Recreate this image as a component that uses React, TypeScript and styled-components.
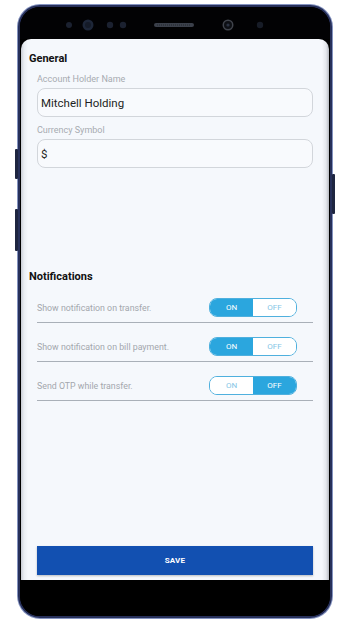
import styled, { createGlobalStyle } from "styled-components";

const GlobalStyle = createGlobalStyle`
  html, body {
    margin: 0;
    padding: 0;
    background: #ffffff;
    font-family: Roboto, "Liberation Sans", Arial, sans-serif;
  }
  * {
    box-sizing: border-box;
  }
`;

const notifications = [
  { label: "Show notification on transfer.", on: true },
  { label: "Show notification on bill payment.", on: true },
  { label: "Send OTP while transfer.", on: false },
];

const Sensors = () => (
  <svg width="310" height="32" viewBox="0 0 310 32">
    <circle cx="49" cy="18" r="3" fill="#1b2130" />
    <circle cx="68" cy="18" r="5.5" fill="#1d2638" />
    <circle cx="68" cy="18" r="3" fill="#151b28" />
    <circle cx="90" cy="18" r="3.2" fill="#1b2130" />
    <circle cx="103" cy="18" r="3.2" fill="#1b2130" />
    <rect x="134" y="16" width="40" height="4" rx="2" fill="#3b404b" />
    <line x1="137" y1="18" x2="171" y2="18" stroke="#22262e" strokeWidth="1" strokeDasharray="1 1" />
    <circle cx="208" cy="18" r="5.5" fill="#40444c" />
    <circle cx="208" cy="18" r="4" fill="#0d0f14" />
    <circle cx="208" cy="18" r="1.6" fill="#2b3242" />
    <circle cx="240" cy="18" r="3.2" fill="#171c27" />
  </svg>
);

export default function App() {
  return (
    <>
      <GlobalStyle />
      <Page>
        <PhoneWrap>
          <SideButton $side="left" $top={144} $height={30} />
          <SideButton $side="left" $top={204} $height={42} />
          <SideButton $side="right" $top={169} $height={40} />
          <Phone>
            <TopBezel>
              <Sensors />
            </TopBezel>
            <Screen>
              <Content>
                <SectionTitle>General</SectionTitle>
                <Field>
                  <Label>Account Holder Name</Label>
                  <Input>Mitchell Holding</Input>
                </Field>
                <Field>
                  <Label>Currency Symbol</Label>
                  <Input>$</Input>
                </Field>

                <SectionTitle $spaced>Notifications</SectionTitle>
                <List>
                  {notifications.map((n) => (
                    <Row key={n.label}>
                      <RowText>{n.label}</RowText>
                      <Toggle>
                        <ToggleHalf $active={n.on}>ON</ToggleHalf>
                        <ToggleHalf $active={!n.on}>OFF</ToggleHalf>
                      </Toggle>
                    </Row>
                  ))}
                </List>
              </Content>
              <SaveButton>SAVE</SaveButton>
            </Screen>
            <BottomBezel />
          </Phone>
        </PhoneWrap>
      </Page>
    </>
  );
}

const Page = styled.div`
  width: 350px;
  height: 622px;
  display: flex;
  justify-content: center;
  padding-top: 5px;
`;

const PhoneWrap = styled.div`
  position: relative;
  width: 314px;
  height: 613px;
`;

const SideButton = styled.div<{ $side: "left" | "right"; $top: number; $height: number }>`
  position: absolute;
  top: ${(p) => p.$top}px;
  ${(p) => (p.$side === "left" ? "left: -3px;" : "right: -3px;")}
  width: 3px;
  height: ${(p) => p.$height}px;
  background: #1e2540;
  border-radius: 1px;
`;

const Phone = styled.div`
  width: 100%;
  height: 100%;
  display: flex;
  flex-direction: column;
  background: #000;
  border: 2px solid #27305a;
  border-radius: 22px;
  box-shadow: 0 0 0 1px #8493c0;
  overflow: hidden;
`;

const TopBezel = styled.div`
  height: 32px;
  flex-shrink: 0;
  display: flex;
  align-items: flex-start;
  background: #020204;
`;

const Screen = styled.div`
  flex: 1;
  display: flex;
  flex-direction: column;
  margin: 0 1px;
  border-radius: 10px 10px 0 0;
  background: linear-gradient(
    to right,
    #c8ccd3 0px,
    #e9edf2 3px,
    #f5f8fc 7px,
    #f5f8fc calc(100% - 7px),
    #e4e7ec calc(100% - 3px),
    #b7bbc2 100%
  );
  padding: 0 16px 5px 16px;
`;

const Content = styled.div`
  flex: 1;
  padding-top: 13px;
`;

const SectionTitle = styled.h2<{ $spaced?: boolean }>`
  margin: ${(p) => (p.$spaced ? "102px" : "0")} 0 0 -8px;
  font-size: 11px;
  line-height: 14px;
  font-weight: 700;
  color: #111;
`;

const Field = styled.div`
  display: flex;
  flex-direction: column;
  margin-top: 2px;
`;

const Label = styled.div`
  font-size: 9px;
  line-height: 18px;
  color: #a7abb1;
  padding-top: 2px;
`;

const Input = styled.div`
  height: 29px;
  display: flex;
  align-items: center;
  padding-left: 3px;
  border: 1px solid #d2d6db;
  border-radius: 8px;
  background: #f8fafd;
  font-size: 11.5px;
  color: #1d1f23;
`;

const List = styled.div`
  display: flex;
  flex-direction: column;
`;

const Row = styled.div`
  display: flex;
  align-items: center;
  justify-content: space-between;
  padding: 14px 16px 5px 0;
  border-bottom: 1px solid #a9b0b8;
`;

const RowText = styled.span`
  font-size: 8.8px;
  color: #a3a7ad;
`;

const Toggle = styled.div`
  display: flex;
  width: 88px;
  height: 19px;
  border: 1px solid #4fb0de;
  border-radius: 8px;
  overflow: hidden;
  background: #ffffff;
`;

const ToggleHalf = styled.div<{ $active: boolean }>`
  flex: 1;
  display: flex;
  align-items: center;
  justify-content: center;
  font-size: 8px;
  background: ${(p) => (p.$active ? "#2ba6de" : "#ffffff")};
  color: ${(p) => (p.$active ? "#ffffff" : "#86c6e6")};
`;

const SaveButton = styled.button`
  height: 29px;
  width: 100%;
  border: none;
  background: #1250b1;
  color: #ffffff;
  font-family: inherit;
  font-size: 8px;
  font-weight: 700;
  letter-spacing: 0.2px;
  box-shadow: 0 1px 2px rgba(0, 0, 0, 0.25);
`;

const BottomBezel = styled.div`
  height: 36px;
  flex-shrink: 0;
  background: #000;
`;
